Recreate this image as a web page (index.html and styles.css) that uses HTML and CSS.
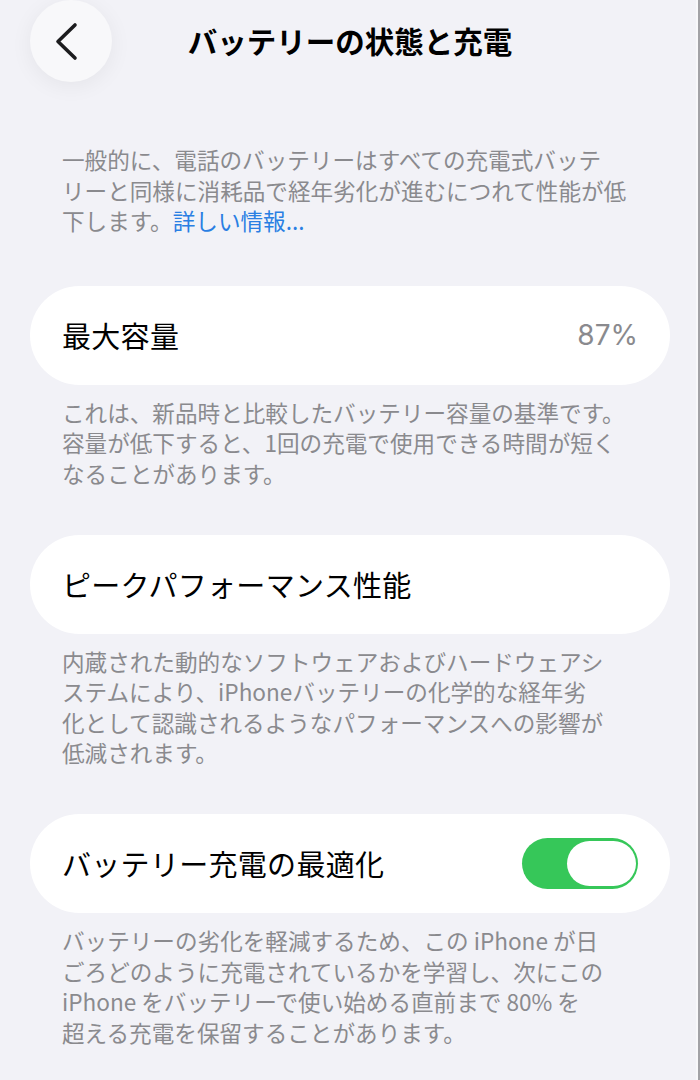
FILE: index.html
```html
<!DOCTYPE html>
<html lang="ja">
<head>
<meta charset="utf-8">
<title>バッテリーの状態と充電</title>
<link rel="stylesheet" href="styles.css">
</head>
<body>
<header class="nav">
  <button class="back" aria-label="戻る">
    <svg width="30" height="40" viewBox="0 0 30 40"><path d="M22 4 L5 20.5 L22 37" fill="none" stroke="#1c1c1e" stroke-width="3.6" stroke-linecap="round" stroke-linejoin="round"/></svg>
  </button>
  <h1 class="title">バッテリーの状態と充電</h1>
  <span class="spacer"></span>
</header>
<main class="content">
  <p class="caption intro">一般的に、電話のバッテリーはすべての充電式バッテ<br>リーと同様に消耗品で経年劣化が進むにつれて性能が低<br>下します。<a class="link" href="#">詳しい情報...</a></p>

  <div class="card">
    <span class="label">最大容量</span>
    <span class="value">87%</span>
  </div>
  <p class="caption">これは、新品時と比較したバッテリー容量の基準です。<br>容量が低下すると、1回の充電で使用できる時間が短く<br>なることがあります。</p>

  <div class="card">
    <span class="label">ピークパフォーマンス性能</span>
  </div>
  <p class="caption">内蔵された動的なソフトウェアおよびハードウェアシ<br>ステムにより、iPhoneバッテリーの化学的な経年劣<br>化として認識されるようなパフォーマンスへの影響が<br>低減されます。</p>

  <div class="card">
    <span class="label">バッテリー充電の最適化</span>
    <span class="toggle"><span class="knob"></span></span>
  </div>
  <p class="caption">バッテリーの劣化を軽減するため、この<span class="latin">iPhone</span>が日<br>ごろどのように充電されているかを学習し、次にこの<br><span class="latin start">iPhone</span>をバッテリーで使い始める直前まで<span class="latin">80%</span>を<br>超える充電を保留することがあります。</p>
</main>
</body>
</html>
```
FILE: styles.css
```css
html, body {
  margin: 0;
  padding: 0;
}
body {
  background: #f2f2f7;
  min-height: 100vh;
  font-family: "Noto Sans CJK JP", "Noto Sans", sans-serif;
  color: #000;
  box-shadow: inset -2px 0 0 #a2a2a6, inset -4px 0 0 #f8f8fa;
}
.nav {
  display: grid;
  grid-template-columns: 82px 1fr 82px;
  align-items: center;
  height: 82px;
  padding: 0 30px;
}
.back {
  width: 82px;
  height: 82px;
  border-radius: 50%;
  border: none;
  padding: 0 6px 0 0;
  background: #f8f8fa;
  box-shadow: 0 4px 22px rgba(0, 0, 0, 0.06);
  display: flex;
  align-items: center;
  justify-content: center;
}
.title {
  margin: 0;
  text-align: center;
  font-size: 29.5px;
  font-weight: 700;
  line-height: 1;
}
.content {
  padding: 0 30px;
}
.caption {
  margin: 0;
  padding: 0 32px;
  font-size: 22.6px;
  line-height: 30.5px;
  color: #8a8a8e;
  white-space: nowrap;
}
.latin {
  margin: 0 5px;
}
.latin.start {
  margin-left: 0;
}
.intro {
  margin-top: 63px;
  margin-bottom: 49px;
}
.link {
  color: #2a7fe3;
  text-decoration: none;
}
.card {
  display: flex;
  align-items: center;
  justify-content: space-between;
  height: 99px;
  padding: 0 32px;
  background: #fff;
  border-radius: 50px;
  margin-bottom: 13px;
}
.card + .caption {
  margin-bottom: 45.5px;
}
.label {
  font-size: 29px;
  letter-spacing: 0.3px;
  line-height: 1;
}
.value {
  font-family: Inter, "Noto Sans", sans-serif;
  font-size: 28px;
  color: #8a8a8e;
  font-weight: 400;
}
.toggle {
  display: flex;
  justify-content: flex-end;
  align-items: center;
  width: 116px;
  height: 51px;
  box-sizing: border-box;
  padding: 3px 2px 3px 3px;
  border-radius: 26px;
  background: #36c759;
}
.knob {
  display: block;
  width: 69px;
  height: 45px;
  border-radius: 23px;
  background: #fff;
}
```
